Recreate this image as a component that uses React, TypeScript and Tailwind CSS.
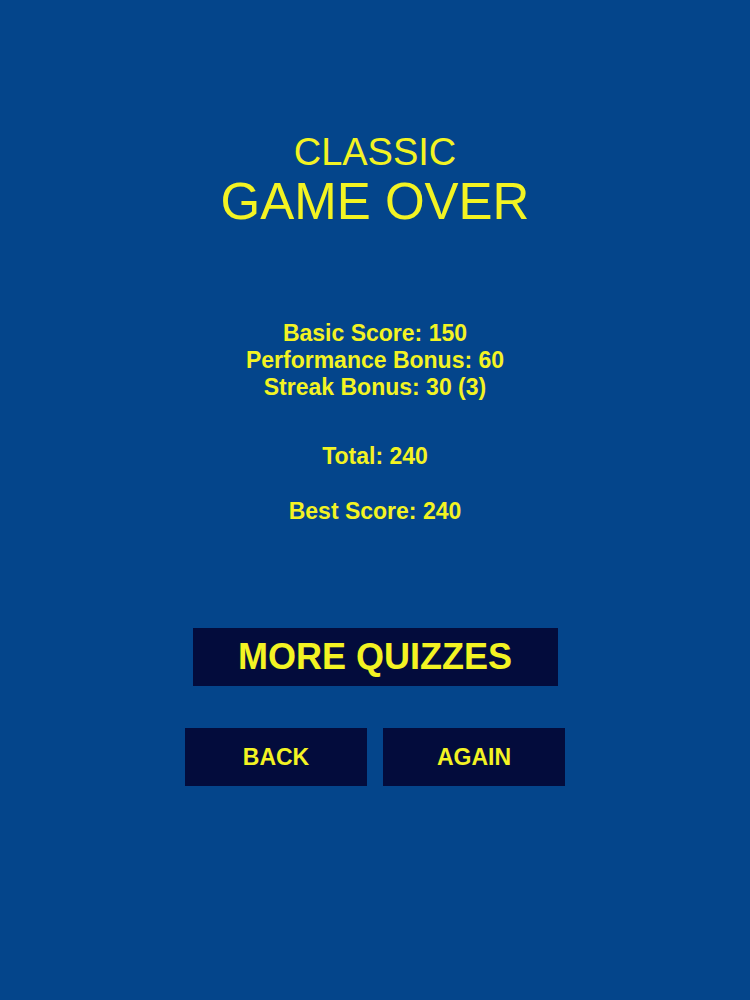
export default function App() {
  const font = { fontFamily: '"Liberation Sans", Arial, sans-serif' };
  return (
    <div className="min-h-screen w-full bg-[#04458b] text-[#f3f323]" style={font}>
      <div className="flex flex-col items-center pt-[130px]">
        <h2 className="text-[38px] leading-[44px] font-normal">CLASSIC</h2>
        <h1 className="text-[51px] leading-[56px] font-normal">GAME OVER</h1>

        <div className="mt-[90px] flex flex-col items-center text-[23px] leading-[27px] font-bold">
          <p>Basic Score: 150</p>
          <p>Performance Bonus: 60</p>
          <p>Streak Bonus: 30 (3)</p>
          <p className="mt-[42px]">Total: 240</p>
          <p className="mt-[28px]">Best Score: 240</p>
        </div>

        <button className="mt-[103px] w-[365px] h-[58px] bg-[#030c3c] text-[36px] font-bold flex items-center justify-center">
          MORE QUIZZES
        </button>

        <div className="mt-[42px] flex gap-[16px]">
          <button className="w-[182px] h-[58px] bg-[#030c3c] text-[23px] font-bold flex items-center justify-center">
            BACK
          </button>
          <button className="w-[182px] h-[58px] bg-[#030c3c] text-[23px] font-bold flex items-center justify-center">
            AGAIN
          </button>
        </div>
      </div>
    </div>
  );
}
